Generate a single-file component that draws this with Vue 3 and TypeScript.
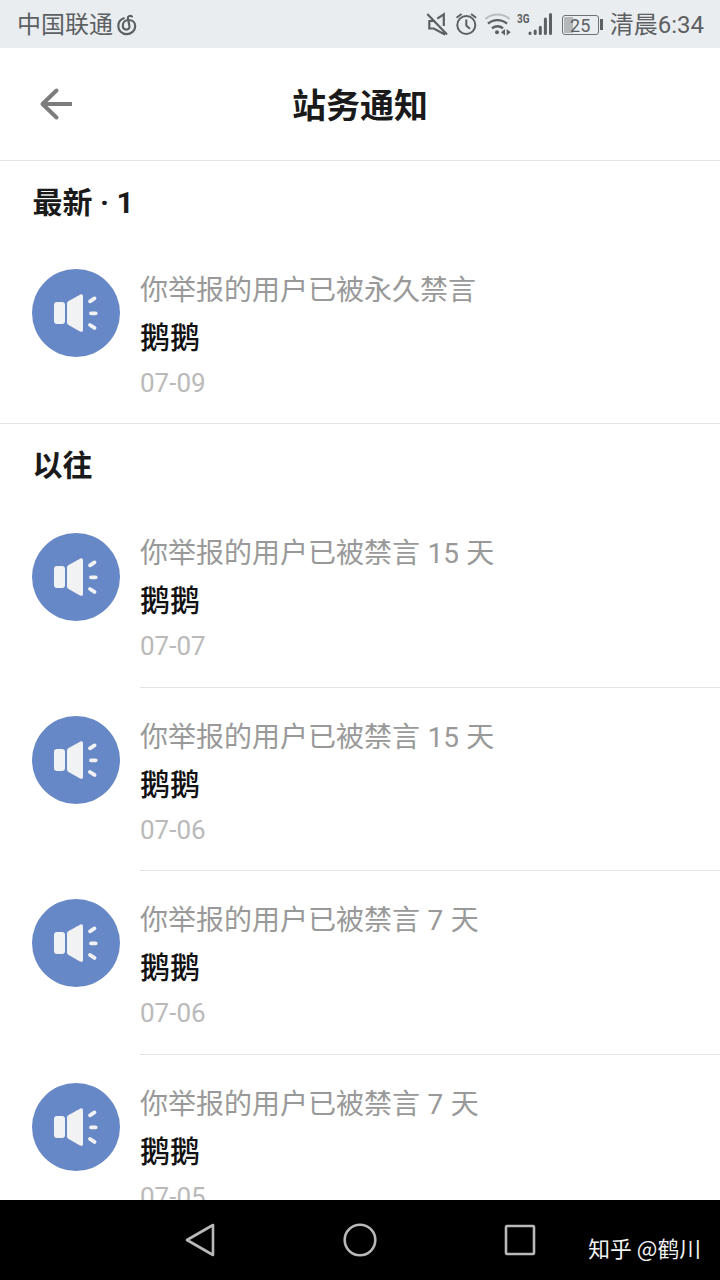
<script setup lang="ts">
interface Notice {
  title: string
  user: string
  date: string
}

interface Section {
  heading: string
  notices: Notice[]
}

const sections: Section[] = [
  {
    heading: '最新 · 1',
    notices: [{ title: '你举报的用户已被永久禁言', user: '鹅鹅', date: '07-09' }],
  },
  {
    heading: '以往',
    notices: [
      { title: '你举报的用户已被禁言 15 天', user: '鹅鹅', date: '07-07' },
      { title: '你举报的用户已被禁言 15 天', user: '鹅鹅', date: '07-06' },
      { title: '你举报的用户已被禁言 7 天', user: '鹅鹅', date: '07-06' },
      { title: '你举报的用户已被禁言 7 天', user: '鹅鹅', date: '07-05' },
    ],
  },
]
</script>

<template>
  <div class="screen">
    <div class="status">
      <span class="carrier">中国联通</span>
      <svg class="music" width="20" height="22" viewBox="0 0 20 22" fill="none" stroke="#5c6063" stroke-width="2.200" stroke-linecap="round">
        <path d="M6.800 4.300C3.500 5.500 1.300 8.500 1.300 12c0 4.600 3.600 8.200 8.200 8.200s8.700-3.500 8.700-8c0-3.900-3-6.200-6.700-6.200-3.600 0-5.700 2.600-5.700 5.600 0 2.500 1.500 4 3.600 4 2.200 0 3.500-1.800 3-3.900L10.900 4.600c-.5-2.400 1.900-3.500 4-2.200" />
      </svg>
      <div class="spacer"></div>
      <svg class="signals" width="130" height="24" viewBox="0 0 130 24" fill="none" stroke="#5c6063" stroke-width="2">
        <path d="M2.300 2L22 22.500M12.300 6.600L18.800 2.300V14M8.800 9H4.300v7.500h4.500L18.800 22v-3" stroke-width="2.200" />
        <circle cx="41.300" cy="13" r="9" />
        <path d="M41.300 7.500V13.500l3.600 3.200M31.500 5.700l5-3.700M51.100 5.700l-5-3.700" />
        <path d="M60.500 7c6.500-6 17.500-6 24 0" stroke="#b9bdc0" stroke-width="2.200" />
        <path d="M63 11.600c5.500-4.700 13.500-4.700 19 0M67 16.300c3.500-2.700 7.500-2.700 11 0" stroke-width="2.400" />
        <circle cx="72" cy="20.300" r="2" fill="#5c6063" stroke="none" />
        <path d="M80 17v6.500l-4-3.200zM81.700 17v6.500l4-3.200z" fill="#5c6063" stroke="none" />
        <text x="92" y="10.700" textLength="12.500" lengthAdjust="spacingAndGlyphs" class="network" fill="#5c6063" stroke="none">3G</text>
        <path d="M105 21v.5M110.200 19v2.500M115.300 15.300v6.200M120.400 7v14.500M125.500 2.500v19" stroke-width="3" stroke-linecap="round" />
      </svg>
      <div class="battery">
        <span class="cell">25</span>
        <i class="cap"></i>
      </div>
      <span class="clock">清晨6:34</span>
    </div>

    <header class="header">
      <svg class="back" width="34" height="34" viewBox="0 0 34 34" fill="none" stroke="#7d7d7d" stroke-width="4">
        <path d="M34 17H5" />
        <path d="M18.500 3.500L4.500 17l14 13.500" stroke-linecap="round" stroke-linejoin="round" />
      </svg>
      <h1 class="heading">站务通知</h1>
    </header>

    <main class="content">
      <section v-for="section in sections" :key="section.heading" class="section">
        <h2 class="label">{{ section.heading }}</h2>
        <article v-for="(notice, i) in section.notices" :key="i" class="notice">
          <svg class="avatar" width="88" height="88" viewBox="0 0 88 88">
            <circle cx="44" cy="44" r="44" fill="#6788c6" />
            <g fill="#f1f2f4">
              <rect x="22" y="33" width="11" height="22" rx="3" />
              <path d="M35 35c0-1.400.5-2.200 1.600-3L48 25.700c1.600-.9 3-.2 3 1.600v33.600c0 1.800-1.400 2.500-3 1.500L36.600 56c-1.100-.8-1.600-1.600-1.600-3z" />
            </g>
            <path d="M58 32.300l4.500-2.900M59 44.300h4.700M58 56l4.500 2.900" stroke="#f1f2f4" stroke-width="3.800" stroke-linecap="round" />
          </svg>
          <div class="body">
            <p class="title">{{ notice.title }}</p>
            <p class="user">{{ notice.user }}</p>
            <p class="date">{{ notice.date }}</p>
          </div>
        </article>
      </section>
    </main>

    <nav class="nav">
      <svg class="keys" width="352" height="34" viewBox="0 0 352 34" fill="none" stroke="#b9b9b9" stroke-width="2.600" stroke-linejoin="round">
        <path d="M29 2v30L3 17z" />
        <circle cx="176" cy="17" r="15.300" />
        <rect x="322" y="3" width="28" height="28" rx="1" />
      </svg>
      <span class="credit">知乎 @鹤川</span>
    </nav>
  </div>
</template>

<style>
body {
  margin: 0;
  background: #fff;
}
</style>

<style scoped>
.screen {
  display: flex;
  flex-direction: column;
  width: 720px;
  height: 1280px;
  overflow: hidden;
  background: #fff;
  color: #1a1a1a;
  font-family: Roboto, "Noto Sans CJK SC", sans-serif;
}

.status {
  display: flex;
  flex: none;
  align-items: center;
  height: 48px;
  padding: 2px 16px 0 17px;
  box-sizing: border-box;
  background: #eaedf0;
  color: #5c6063;
  font-size: 24px;
  line-height: 46px;
  white-space: nowrap;
}

.carrier {
  width: 95px;
}

.music {
  margin: 0 0 1px 5px;
}

.spacer {
  flex: 1;
}

.signals {
  flex: none;
  overflow: visible;
  margin-bottom: 2px;
}

.network {
  font: 700 13.500px Roboto, sans-serif;
}

.battery {
  display: flex;
  align-items: center;
  margin: 0 7px 1px 7px;
}

.cell {
  width: 37px;
  height: 20px;
  box-sizing: border-box;
  border: 1.500px solid #6d7174;
  border-radius: 3px;
  background: linear-gradient(90deg, #b4b7ba 9px, transparent 9px) content-box;
  padding: 1px;
  font-size: 18px;
  line-height: 17px;
  text-align: center;
}

.cap {
  width: 3px;
  height: 11px;
  margin-left: 1px;
  background: #5c6063;
}

.clock {
  font-size: 24px;
}

.header {
  display: grid;
  grid-template-columns: 73px 1fr 73px;
  flex: none;
  align-items: center;
  height: 113px;
  box-sizing: border-box;
  border-bottom: 1px solid #e4e4e4;
}

.back {
  justify-self: end;
  margin-right: 1px;
}

.heading {
  margin: 4px 0 0;
  font-size: 34px;
  font-weight: 700;
  line-height: 50px;
  text-align: center;
}

.content {
  flex: 1;
  min-height: 0;
  overflow: hidden;
}

.label {
  height: 80px;
  margin: 0;
  padding-left: 32.500px;
  font-size: 30px;
  font-weight: 700;
  line-height: 83px;
}

.notice {
  display: flex;
  height: 183.400px;
  padding-left: 32px;
  box-sizing: border-box;
}

.avatar {
  flex: none;
  margin: 28.200px 20px 0 0;
}

.body {
  flex: 1;
  padding-top: 26px;
  border-bottom: 1px solid #e4e4e4;
}

.section:first-child .notice {
  border-bottom: 1px solid #e4e4e4;
}

.section:first-child .body {
  border-bottom: 0;
}

.title,
.user,
.date {
  margin: 0;
}

.title {
  color: #999;
  font-size: 28px;
  line-height: 48px;
  word-spacing: 0.500px;
}

.user {
  color: #111;
  font-size: 30px;
  font-weight: 500;
  line-height: 46px;
}

.date {
  color: #bababa;
  font-size: 26px;
  line-height: 44px;
}

.nav {
  display: flex;
  flex: none;
  align-items: center;
  height: 80px;
  padding: 0 19px 0 184px;
  box-sizing: border-box;
  background: #000;
}

.keys {
  flex: none;
}

.credit {
  margin: 16px 0 0 auto;
  color: #f2f2f2;
  font-family: "Noto Sans CJK SC", sans-serif;
  font-size: 21.800px;
  line-height: 32px;
  white-space: nowrap;
}
</style>
